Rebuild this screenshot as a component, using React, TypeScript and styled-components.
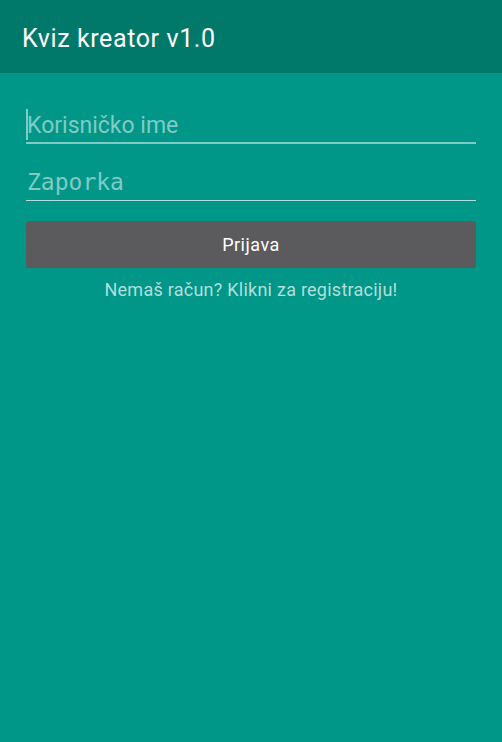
import React from "react";
import styled, { createGlobalStyle } from "styled-components";

const Global = createGlobalStyle`
  html, body { margin: 0; padding: 0; background: #009688; }
  body { font-family: Roboto, "Noto Sans", sans-serif; }
  * { box-sizing: border-box; }
`;

const Screen = styled.div`
  width: 502px;
  height: 742px;
  background: #009688;
  display: flex;
  flex-direction: column;
`;

const AppBar = styled.header`
  height: 73px;
  background: #00796b;
  display: flex;
  align-items: center;
  padding: 3px 22px 0;
`;

const Title = styled.h1`
  margin: 0;
  font-family: Roboto, sans-serif;
  font-weight: 400;
  font-size: 25px;
  letter-spacing: 0.6px;
  color: #ffffff;
`;

const Form = styled.form`
  display: flex;
  flex-direction: column;
  padding: 34px 26px 0;
`;

const Field = styled.div<{ $thick?: boolean; $mb: number }>`
  position: relative;
  height: ${(p) => (p.$thick ? 37 : 36)}px;
  border-bottom: ${(p) => (p.$thick ? "2px solid #80cbc4" : "1px solid #b2dfdb")};
  margin-bottom: ${(p) => p.$mb}px;
  display: flex;
  align-items: flex-end;
`;

const Input = styled.input<{ $mono?: boolean }>`
  width: 100%;
  border: none;
  outline: none;
  background: transparent;
  padding: 0 0 ${(p) => (p.$mono ? 3 : 2)}px 1px;
  font-family: ${(p) => (p.$mono ? '"DejaVu Sans Mono", monospace' : "Roboto, sans-serif")};
  font-size: ${(p) => (p.$mono ? 23 : 23)}px;
  line-height: 1.2;
  color: #ffffff;
  &::placeholder { color: #80cbc4; opacity: 1; }
`;

const Caret = styled.span`
  position: absolute;
  left: 0;
  top: 2px;
  width: 2px;
  height: 31px;
  background: #80cbc4;
`;

const Button = styled.button`
  height: 47px;
  border: none;
  border-radius: 3px;
  background: #5b5a5c;
  color: #ffffff;
  font-family: Roboto, sans-serif;
  font-size: 18px;
  letter-spacing: 0.5px;
  cursor: pointer;
`;

const LinkText = styled.p`
  margin: 11px 0 0;
  text-align: center;
  font-family: Roboto, sans-serif;
  font-size: 18px;
  letter-spacing: 0.25px;
  color: #b2dfdb;
`;

export default function App() {
  return (
    <>
      <Global />
      <Screen>
        <AppBar>
          <Title>Kviz kreator v1.0</Title>
        </AppBar>
        <Form onSubmit={(e) => e.preventDefault()}>
          <Field $thick $mb={21}>
            <Caret />
            <Input placeholder="Korisničko ime" />
          </Field>
          <Field $mb={20}>
            <Input $mono type="password" placeholder="Zaporka" />
          </Field>
          <Button type="submit">Prijava</Button>
          <LinkText>Nemaš račun? Klikni za registraciju!</LinkText>
        </Form>
      </Screen>
    </>
  );
}
